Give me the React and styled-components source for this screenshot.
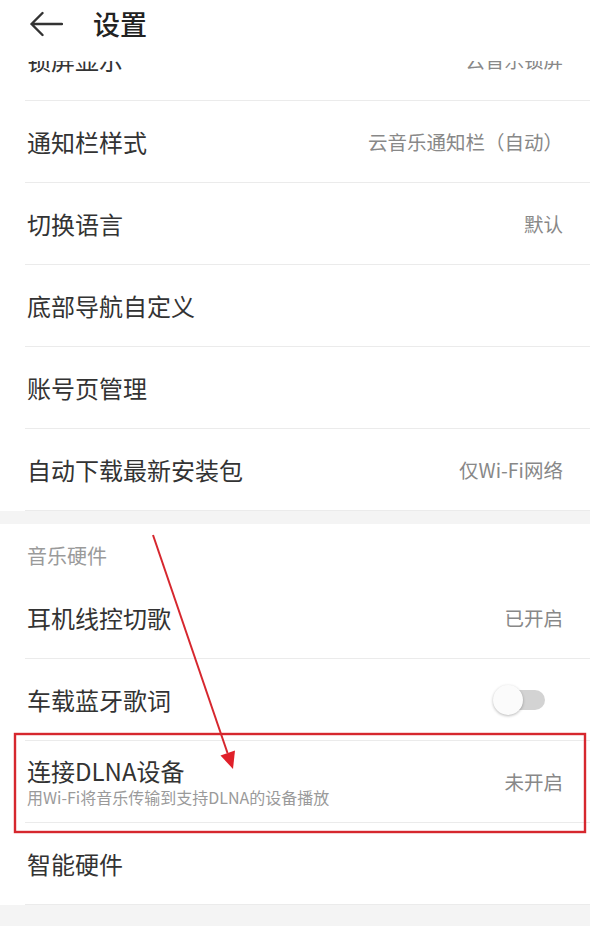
import React from "react";
import styled, { createGlobalStyle } from "styled-components";

const GlobalStyle = createGlobalStyle`
  html, body {
    margin: 0;
    padding: 0;
    background: #ffffff;
  }
  body {
    font-family: "Noto Sans CJK SC", "Noto Sans", sans-serif;
    -webkit-font-smoothing: antialiased;
  }
`;

const Screen = styled.div`
  position: relative;
  width: 590px;
  height: 926px;
  overflow: hidden;
  background: #f4f4f4;
`;

const Header = styled.header`
  position: relative;
  z-index: 2;
  height: 61px;
  box-sizing: border-box;
  padding: 8px 0 0 29px;
  display: flex;
  align-items: flex-start;
  background: #ffffff;
`;

const BackButton = styled.button`
  width: 34px;
  height: 32px;
  padding: 0;
  border: 0;
  background: transparent;
  display: flex;
  align-items: center;
  justify-content: center;
  color: #333333;
`;

const Title = styled.h1`
  margin: 0 0 0 30px;
  font-size: 27px;
  line-height: 32px;
  font-weight: 500;
  color: #222222;
`;

const Content = styled.main`
  margin-top: -42px;
  display: flex;
  flex-direction: column;
`;

const Group = styled.section`
  background: #ffffff;
  display: flex;
  flex-direction: column;
`;

const Gap = styled.div`
  height: ${(p) => p.$h}px;
  background: #f4f4f4;
`;

const SectionTitle = styled.div`
  height: 53px;
  box-sizing: border-box;
  padding: 10px 0 0 27px;
  display: flex;
  align-items: center;
  font-size: 20px;
  color: #9a9a9a;
`;

const Row = styled.div`
  height: 81px;
  margin-left: 25px;
  padding: 0 27px 0 2px;
  display: flex;
  align-items: center;
  justify-content: space-between;
  border-bottom: 1px solid #ebebeb;
`;

const Texts = styled.div`
  display: flex;
  flex-direction: column;
`;

const Label = styled.span`
  font-size: 24px;
  line-height: 30px;
  color: #333333;
`;

const Hint = styled.span`
  font-size: 16px;
  line-height: 22px;
  color: #9a9a9a;
`;

const Value = styled.span`
  font-size: 19.5px;
  color: #888888;
  white-space: nowrap;
`;

const Switch = styled.div`
  position: relative;
  width: 46px;
  height: 20px;
  margin-right: 18px;
  border-radius: 10px;
  background: #d3d3d3;
`;

const Knob = styled.span`
  position: absolute;
  left: -6px;
  top: -5px;
  width: 30px;
  height: 30px;
  border-radius: 50%;
  background: #fbfbfb;
  box-shadow: 0 1px 3px rgba(0, 0, 0, 0.28);
`;

const Marks = styled.svg`
  position: absolute;
  left: 0;
  top: 0;
  z-index: 3;
  pointer-events: none;
`;

const BackArrow = () => (
  <svg width="34" height="26" viewBox="0 0 34 26" fill="none">
    <path
      d="M33 13H2.5M13.5 2L2.5 13L13.5 24"
      stroke="currentColor"
      strokeWidth="2.4"
      strokeLinecap="round"
      strokeLinejoin="round"
    />
  </svg>
);

const general = [
  { label: "锁屏显示", value: "云音乐锁屏" },
  { label: "通知栏样式", value: "云音乐通知栏（自动）" },
  { label: "切换语言", value: "默认" },
  { label: "底部导航自定义" },
  { label: "账号页管理" },
  { label: "自动下载最新安装包", value: "仅Wi-Fi网络" },
];

const hardware = [
  { label: "耳机线控切歌", value: "已开启" },
  { label: "车载蓝牙歌词", toggle: true },
  {
    label: "连接DLNA设备",
    hint: "用Wi-Fi将音乐传输到支持DLNA的设备播放",
    value: "未开启",
  },
  { label: "智能硬件" },
];

const SettingRow = ({ label, hint, value, toggle }) => (
  <Row>
    <Texts>
      <Label>{label}</Label>
      {hint && <Hint>{hint}</Hint>}
    </Texts>
    {value && <Value>{value}</Value>}
    {toggle && (
      <Switch>
        <Knob />
      </Switch>
    )}
  </Row>
);

export default function App() {
  return (
    <>
      <GlobalStyle />
      <Screen>
        <Header>
          <BackButton aria-label="返回">
            <BackArrow />
          </BackButton>
          <Title>设置</Title>
        </Header>
        <Content>
          <Group>
            {general.map((item) => (
              <SettingRow key={item.label} {...item} />
            ))}
          </Group>
          <Gap $h={13} />
          <Group>
            <SectionTitle>音乐硬件</SectionTitle>
            {hardware.map((item) => (
              <SettingRow key={item.label} {...item} />
            ))}
          </Group>
          <Gap $h={40} />
        </Content>
        <Marks width="590" height="926" viewBox="0 0 590 926">
          <rect
            x="15"
            y="734"
            width="570"
            height="98"
            fill="none"
            stroke="#d6272e"
            strokeWidth="2.4"
          />
          <line
            x1="153"
            y1="535"
            x2="227.5"
            y2="753"
            stroke="#d6272e"
            strokeWidth="2"
          />
          <polygon points="233,769 235,750.5 220.5,755.5" fill="#e0202a" />
        </Marks>
      </Screen>
    </>
  );
}
